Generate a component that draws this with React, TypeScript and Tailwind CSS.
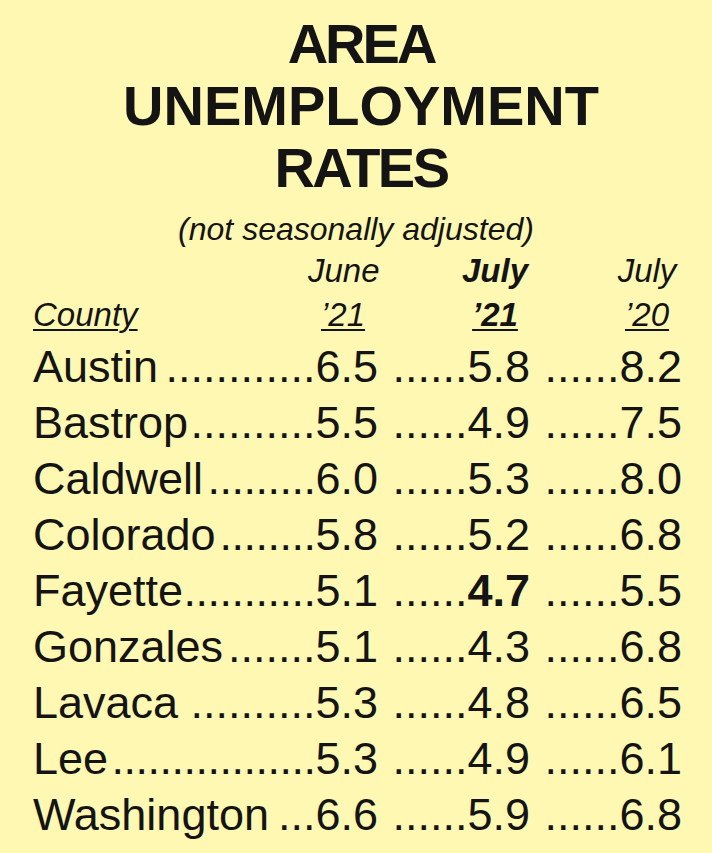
import clsx from "clsx";

// dots = how many leader dots fit between the name and the June figure;
// tight squeezes them a little so they reach the name
const rates = [
  { county: "Austin", dots: 12, june21: "6.5", july21: "5.8", july20: "8.2" },
  { county: "Bastrop", dots: 10, june21: "5.5", july21: "4.9", july20: "7.5" },
  { county: "Caldwell", dots: 9, tight: true, june21: "6.0", july21: "5.3", july20: "8.0" },
  { county: "Colorado", dots: 8, tight: true, june21: "5.8", july21: "5.2", july20: "6.8" },
  { county: "Fayette", dots: 11, tight: true, june21: "5.1", july21: "4.7", july20: "5.5", low: true },
  { county: "Gonzales", dots: 7, june21: "5.1", july21: "4.3", july20: "6.8" },
  { county: "Lavaca", dots: 10, june21: "5.3", july21: "4.8", july20: "6.5" },
  { county: "Lee", dots: 17, tight: true, june21: "5.3", july21: "4.9", july20: "6.1" },
  { county: "Washington", dots: 3, june21: "6.6", july21: "5.9", july20: "6.8" },
];

function Head({ children, bold, line }: { children: React.ReactNode; bold?: boolean; line?: boolean }) {
  return (
    <span className={clsx("w-[70px] text-center", bold && "font-bold")}>
      <span className={clsx(line && "underline decoration-2 underline-offset-[3px]")}>{children}</span>
    </span>
  );
}

export default function App() {
  return (
    <div className="min-h-screen w-full bg-[#fff8b3] text-[#141414] font-['Liberation_Sans',Arial,Helvetica,sans-serif]">
      <div className="pt-[13px] pl-[10px] text-center text-[56px] font-bold leading-[62px]">
        <div className="tracking-[-3px]">AREA</div>
        <div>UNEMPLOYMENT</div>
        <div className="tracking-[-2.5px]">RATES</div>
      </div>

      <p className="mt-[10px] text-center text-[32px] italic leading-[40px]">(not seasonally adjusted)</p>

      <div className="pl-[33px] pr-[30px]">
        <div className="grid grid-cols-[345px_152px_152px] text-[33px] italic leading-[44px]">
          <div className="flex justify-end">
            <Head>June</Head>
          </div>
          <div className="flex justify-end">
            <Head bold>July</Head>
          </div>
          <div className="flex justify-end">
            <Head>July</Head>
          </div>

          <div className="flex justify-between">
            <span className="underline decoration-2 underline-offset-[3px]">County</span>
            <Head line>’21</Head>
          </div>
          <div className="flex justify-end">
            <Head bold line>’21</Head>
          </div>
          <div className="flex justify-end">
            <Head line>’20</Head>
          </div>
        </div>

        <div className="mt-[2px] grid grid-cols-[345px_152px_152px] text-[45px] leading-[56px]">
          {rates.map((r) => (
            <div key={r.county} className="contents">
              <div className="flex justify-between whitespace-nowrap">
                <span>{r.county}</span>
                <span>
                  <span className={clsx(r.tight && "tracking-[-0.5px]")}>{".".repeat(r.dots)}</span>
                  {r.june21}
                </span>
              </div>
              <div className="text-right whitespace-nowrap">
                ......<span className={clsx(r.low && "font-bold")}>{r.july21}</span>
              </div>
              <div className="text-right whitespace-nowrap">......{r.july20}</div>
            </div>
          ))}
        </div>
      </div>
    </div>
  );
}
